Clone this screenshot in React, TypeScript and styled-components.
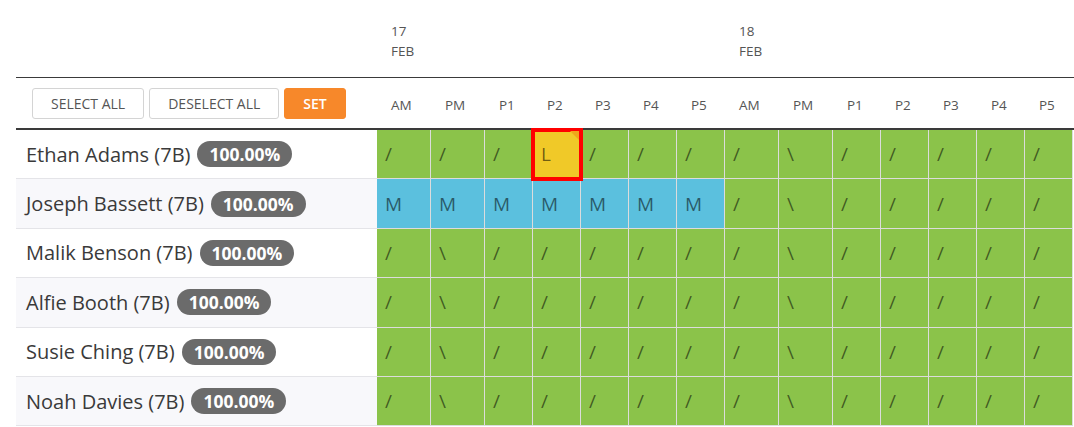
import styled, { createGlobalStyle } from "styled-components";

const GlobalStyle = createGlobalStyle`
  html, body {
    margin: 0;
    padding: 0;
    background: #fff;
  }
  body {
    font-family: "Open Sans", "Liberation Sans", sans-serif;
  }
`;

const COLS = "361px 54px 54px repeat(5, 48px) 54px 54px repeat(5, 48px)";

const Page = styled.div`
  padding-left: 16px;
  width: 1058px;
`;

const DateRow = styled.div`
  display: grid;
  grid-template-columns: ${COLS};
  height: 77px;
  border-bottom: 1px solid #3a3a3a;
`;

const DateLabel = styled.div<{ $col: number }>`
  grid-column: ${(p) => p.$col} / span 7;
  padding: 21px 0 0 14px;
  font-size: 13.5px;
  line-height: 20px;
  color: #555;
`;

const LabelRow = styled.div`
  display: grid;
  grid-template-columns: ${COLS};
  height: 50px;
  border-bottom: 2px solid #3a3a3a;
  align-items: center;
`;

const Toolbar = styled.div`
  display: flex;
  gap: 5px;
  padding-left: 16px;
`;

const Button = styled.button<{ $primary?: boolean }>`
  height: 31px;
  padding: 0 18px;
  border-radius: 3px;
  font-family: inherit;
  font-size: 14px;
  text-transform: uppercase;
  cursor: pointer;
  border: 1px solid ${(p) => (p.$primary ? "#f7882a" : "#d4d4d4")};
  background: ${(p) => (p.$primary ? "#f7882a" : "#fff")};
  color: ${(p) => (p.$primary ? "#fff" : "#555")};
  font-weight: ${(p) => (p.$primary ? 600 : 400)};
`;

const ColLabel = styled.div`
  padding: 3px 0 0 14px;
  font-size: 13.5px;
  color: #555;
`;

const Row = styled.div`
  display: grid;
  grid-template-columns: ${COLS};
  height: 49.4px;
`;

const NameCell = styled.div<{ $alt: boolean }>`
  display: flex;
  align-items: center;
  gap: 7px;
  padding-left: 10px;
  background: ${(p) => (p.$alt ? "#f8f8fb" : "#fff")};
  border-bottom: 1px solid #e4e4e8;
  font-size: 20px;
  color: #3a3a3a;
  white-space: nowrap;
`;

const Badge = styled.span`
  display: inline-flex;
  align-items: center;
  height: 26px;
  padding: 0 12px;
  border-radius: 13px;
  background: #6b6b6b;
  color: #fff;
  font-size: 17.5px;
  font-weight: 700;
`;

const MARK_COLORS: Record<string, string> = {
  "/": "#8bc34a",
  "\\": "#8bc34a",
  M: "#5bc0de",
  L: "#f0c928",
};

const Mark = styled.div<{ $code: string; $selected?: boolean }>`
  position: relative;
  display: flex;
  align-items: center;
  padding-left: 8px;
  background: ${(p) => MARK_COLORS[p.$code]};
  border-right: 1px solid #dcdcdc;
  border-bottom: 1px solid #dcdcdc;
  font-size: 19px;
  color: rgba(0, 0, 0, 0.55);
  ${(p) =>
    p.$selected &&
    `
    z-index: 2;
    outline: 4px solid #ff0000;
    outline-offset: -2px;
  `}
`;

const Corner = styled.span`
  position: absolute;
  top: 1px;
  right: 1px;
  width: 0;
  height: 0;
  border-top: 9px solid #f0a51a;
  border-left: 9px solid transparent;
`;

const PERIODS = ["AM", "PM", "P1", "P2", "P3", "P4", "P5"];
const NORMAL = ["/", "\\", "/", "/", "/", "/", "/"];

const pupils = [
  { name: "Ethan Adams (7B)", marks: ["/", "/", "/", "L", "/", "/", "/", ...NORMAL] },
  { name: "Joseph Bassett (7B)", marks: ["M", "M", "M", "M", "M", "M", "M", ...NORMAL] },
  { name: "Malik Benson (7B)", marks: [...NORMAL, ...NORMAL] },
  { name: "Alfie Booth (7B)", marks: [...NORMAL, ...NORMAL] },
  { name: "Susie Ching (7B)", marks: [...NORMAL, ...NORMAL] },
  { name: "Noah Davies (7B)", marks: [...NORMAL, ...NORMAL] },
];

export default function App() {
  return (
    <Page>
      <GlobalStyle />
      <DateRow>
        <div />
        <DateLabel $col={2}>
          17
          <br />
          FEB
        </DateLabel>
        <DateLabel $col={9}>
          18
          <br />
          FEB
        </DateLabel>
      </DateRow>
      <LabelRow>
        <Toolbar>
          <Button>Select all</Button>
          <Button>Deselect all</Button>
          <Button $primary>Set</Button>
        </Toolbar>
        {[...PERIODS, ...PERIODS].map((p, i) => (
          <ColLabel key={i}>{p}</ColLabel>
        ))}
      </LabelRow>
      {pupils.map((pupil, r) => (
        <Row key={pupil.name}>
          <NameCell $alt={r % 2 === 1}>
            {pupil.name}
            <Badge>100.00%</Badge>
          </NameCell>
          {pupil.marks.map((m, c) => (
            <Mark key={c} $code={m} $selected={m === "L"}>
              {m}
              {m === "L" && <Corner />}
            </Mark>
          ))}
        </Row>
      ))}
    </Page>
  );
}
